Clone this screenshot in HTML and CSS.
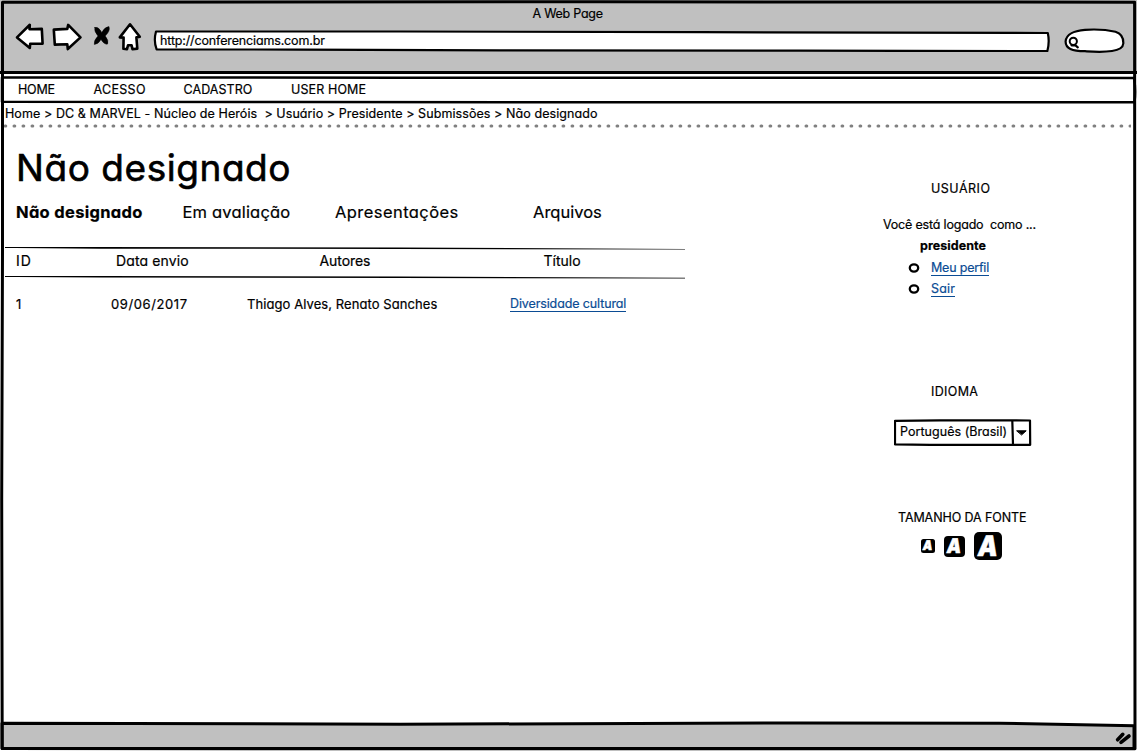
FILE: index.html
```html
<!DOCTYPE html>
<html lang="pt-BR">
<head>
<meta charset="utf-8">
<title>A Web Page</title>
<link rel="stylesheet" href="styles.css">
</head>
<body>
<div class="window">
  <header class="chrome">
    <div class="chrome-title">A Web Page</div>
    <div class="toolbar">
      <svg class="tools" width="130" height="30" viewBox="14 22 130 30">
        <path d="M17 37.4 29.8 24.8 29.5 29.2 41.8 28.9 42.6 43.6 30.2 43.8 29.8 47.9Z"/>
        <path d="M53.8 29.6 67.3 28.9 68.2 24.9 80.5 37.4 67.8 49 67.3 44.3 54.8 44.6Z"/>
        <path class="cross" d="M94.800 27.500Q98.500 26.500 101.800 32.500 104.500 27 109 26.600 110.500 31 105.200 36 109 40.500 107.600 44 104.500 45 101 39.500 98 44.500 94.300 44.400 93.500 40.500 98 36 94 31.500 94.800 27.500Z"/>
        <path d="M130 24.300 139.800 36.800 136.400 37.400 137.300 48.600 132.500 49.200 131.600 45.200 128 45.200 127 49.300 123.400 48.800 123.600 37.600 119.800 37.400Z"/>
      </svg>
      <div class="url">
        <svg class="sketch" width="897" height="22" viewBox="153 30 897 22"><path d="M156 31.500 400 31.500 700 32.200 1047.800 33Q1049.800 42 1047.300 51.200L800 50.700 500 50.300 300 49.600 156.600 49.300Q153.400 41 156 31.500Z"/></svg>
        <span>http://conferenciams.com.br</span>
      </div>
      <svg class="search" width="62" height="26" viewBox="1063 28 62 26">
        <path d="M1065.600 41.500C1066 34 1075 30.500 1085 29.800 1097 29 1108 30 1115.500 31.800 1121 33.500 1123.500 38 1123.300 43.500 1123 48 1119 50 1112 51 1102 52.500 1094 51.800 1085 51.200 1072 51 1065.600 48.500 1065.600 41.500Z"/>
        <circle cx="1073.300" cy="41.300" r="3.600"/><path d="M1071.500 45.300H1075.500L1077.800 47.300"/>
      </svg>
    </div>
  </header>
  <nav class="menu">
    <svg class="sketch" width="1137" height="31" viewBox="0 75 1137 31"><path d="M2 77.400 400 77.700 800 77.700 1134 77.900Q1136 90 1134.500 102.200L700 102.300 300 102 2 101.800Z"/></svg>
    <a class="m1">HOME</a><a class="m2">ACESSO</a><a class="m3">CADASTRO</a><a class="m4">USER HOME</a>
  </nav>
  <div class="crumbs">Home &gt; DC &amp; MARVEL - Núcleo de Heróis&nbsp; &gt; Usuário &gt; Presidente &gt; Submissões &gt; Não designado</div>
  <svg class="dots" width="1131" height="4"><line x1="5" y1="2" x2="1130" y2="2"/></svg>
  <div class="body">
    <main>
      <h1>Não designado</h1>
      <div class="tabs"><b class="t1">Não designado</b><span class="t2">Em avaliação</span><span class="t3">Apresentações</span><span class="t4">Arquivos</span></div>
      <div class="row head">
        <svg class="sketch" width="682" height="34" viewBox="4 246 682 34">
          <path d="M5 247.100H15L100 247.100 400 247.500 685 248.900V249.600L400 249 100 248.700 15 247.900H5Z"/>
          <path d="M5 276.100H15L100 276.100 400 276.400 685 277.800V278.500L400 277.900 100 277.600 15 276.900H5Z"/>
        </svg>
        <span class="c1">ID</span><span class="c2">Data envio</span><span class="c3">Autores</span><span class="c4">Título</span>
      </div>
      <div class="row item"><span class="c1">1</span><span class="c2">09/06/2017</span><span class="c3">Thiago Alves, Renato Sanches</span><span class="c4"><a class="link">Diversidade cultural</a></span></div>
    </main>
    <aside>
      <section class="user">
        <h2>USUÁRIO</h2>
        <p class="logged">Você está logado&nbsp; como ...</p>
        <p class="name">presidente</p>
        <ul>
          <li><svg width="12" height="10"><ellipse cx="6" cy="5" rx="4.200" ry="3.600"/></svg><a class="link l1">Meu perfil</a></li>
          <li><svg width="12" height="10"><ellipse cx="6" cy="5" rx="4.200" ry="3.600"/></svg><a class="link l2">Sair</a></li>
        </ul>
      </section>
      <section class="language">
        <h2>IDIOMA</h2>
        <div class="select">
          <svg class="sketch" width="138" height="28" viewBox="894 419 138 28"><path d="M895 420.800 940 420.300 1030 420.500 1030.200 444.800 930 444.900 895 444.300ZM1012.300 420.500 1013 444.500"/><path class="arrow" d="M1017 430.800H1026.200L1021.800 434.700Z"/></svg>
          <span>Português (Brasil)</span>
        </div>
      </section>
      <section class="fontsize">
        <h2>TAMANHO DA FONTE</h2>
        <div class="sizes"><span class="a s"><i>A</i></span><span class="a m"><i>A</i></span><span class="a l"><i>A</i></span></div>
      </section>
    </aside>
  </div>
  <footer>
    <svg class="sketch" width="1137" height="31" viewBox="0 720 1137 31">
      <path d="M2 723.300 400 724.200 800 723 1000 723.200 1134 725.700V748.600H2Z"/>
      <path class="grip" d="M1117.600 739.800 1122.800 734.300M1121 742.300 1129 736"/>
    </svg>
  </footer>
  <svg class="frame" width="1137" height="751" viewBox="0 0 1137 751"><path d="M2.500 2.200 600 1.800 1134.600 2.200 1134.800 380 1135 748.800 600 748.800 2.200 748.500 1.700 500 2.500 250Z"/></svg>
</div>
</body>
</html>
```
FILE: styles.css
```css
* { box-sizing: border-box; }
body { margin: 0; background: #fff; }
.window {
  position: relative;
  display: flex;
  flex-direction: column;
  width: 1137px;
  height: 751px;
  overflow: hidden;
  font: 12.5px/20px Inter, "Liberation Sans", sans-serif;
  font-feature-settings: "cv11";
  -webkit-text-stroke: .2px;
  color: #000;
}
h1, h2, p, ul { margin: 0; padding: 0; font-weight: 400; }
h2 { font-size: inherit; }
span, b, a, p, h1, h2, .crumbs { white-space: pre; }
svg { fill: #fff; stroke: #000; stroke-width: 2.2; stroke-linejoin: round; stroke-linecap: round; flex: none; display: block; }
.sketch, .frame { position: absolute; left: 0; top: 0; }
.frame { fill: none; stroke-width: 3; pointer-events: none; }

.chrome { height: 75px; background: #c0c0c0; border-bottom: 1px solid #fff; box-shadow: inset 0 -3px #000; padding: 4px 0 0 14px; }
.chrome-title { margin-left: 518.500px; letter-spacing: -.25px; }
.toolbar { display: flex; align-items: flex-start; margin-top: -2px; }
.tools { stroke-width: 2.6; }
.tools .cross { fill: #000; stroke-width: .5; }
.url { position: relative; width: 897px; height: 22px; margin: 8px 0 0 9px; padding: 1px 0 0 7px; letter-spacing: -.15px; }
.url span { position: relative; }
.search { margin: 6px 0 0 13px; }
.search circle { stroke-width: 2; }

.menu { position: relative; display: flex; height: 28px; padding: 5px 0 0 18px; }
.menu .sketch { stroke-width: 2.5; }
.menu a { position: relative; }
.m1 { width: 75.500px; letter-spacing: -.2px; }
.m2 { width: 90px; letter-spacing: .3px; }
.m3 { width: 107.500px; letter-spacing: .07px; }
.m4 { letter-spacing: .12px; }

.crumbs { padding: 1px 0 0 5px; letter-spacing: .08px; height: 21px; }
.dots { stroke: #808080; stroke-width: 3; stroke-dasharray: .8 8.2; }

.body { display: flex; height: 595px; }
main { width: 883px; }
h1 { font-size: 37px; line-height: 44px; margin: 18px 0 0 16px; letter-spacing: .55px; -webkit-text-stroke: .6px; }
.tabs { display: flex; padding: 10px 0 0 16px; font-size: 16.5px; line-height: 24px; }
.t1 { width: 166.500px; letter-spacing: .32px; }
.t2 { width: 152.500px; letter-spacing: .18px; }
.t3 { width: 198px; letter-spacing: .43px; }
.row { position: relative; display: flex; }
.row span { position: relative; }
.head { margin: 22px 0 0 4px; height: 34px; padding: 5px 0 0 12px; font-size: 14px; }
.head .sketch { fill: #000; stroke: none; }
.head .c1 { width: 100px; letter-spacing: 1px; }
.head .c2 { width: 203.500px; letter-spacing: .12px; }
.head .c3 { width: 224px; letter-spacing: -.06px; }
.item { margin-top: 14px; padding-left: 16px; font-size: 13px; }
.item .c1 { width: 95px; }
.item .c2 { width: 136px; letter-spacing: .6px; }
.item .c3 { width: 263px; letter-spacing: .08px; }
.item .c4 { font-size: 12.5px; letter-spacing: -.12px; }
.link { color: #0b4c94; border-bottom: 1px solid #0b4c94; line-height: 15px; display: inline-block; }

aside { padding-top: 51px; }
.user h2 { margin-left: 48px; letter-spacing: .5px; }
.logged { margin-top: 16px; letter-spacing: -.19px; }
.name { margin: 1px 0 0 37px; font-weight: 700; letter-spacing: .05px; }
li { display: flex; align-items: center; height: 21px; margin-left: 25px; }
ul { padding-top: 1px; }
li svg { stroke-width: 2.3; margin-right: 11px; }
.l1 { letter-spacing: -.2px; }
.l2 { letter-spacing: .2px; }
.language { margin-top: 83px; }
.language h2 { margin-left: 48px; letter-spacing: .35px; }
.select { position: relative; width: 138px; height: 28px; margin: 17px 0 0 11px; padding: 3px 0 0 6px; letter-spacing: .04px; }
.select span { position: relative; }
.arrow { fill: #000; stroke-width: 1; }
.fontsize { margin-top: 61px; }
.fontsize h2 { margin-left: 15px; letter-spacing: -.1px; }
.sizes { display: flex; align-items: center; margin: 4px 0 0 38px; }
.a { display: flex; align-items: center; justify-content: center; background: #000; color: #fff; font-weight: 900; line-height: 1; }
.a i { font-style: normal; transform: skewX(-8deg) scaleY(1.12); -webkit-text-stroke: .5px; }
.s { width: 14px; height: 14px; font-size: 12px; border-radius: 2.5px; margin-right: 9px; }
.m { width: 21px; height: 21px; font-size: 18px; border-radius: 4px; margin-right: 9px; }
.l { width: 28px; height: 28px; font-size: 25px; border-radius: 5px; }

footer { position: relative; height: 28px; margin-top: auto; }
footer .sketch { top: -3px; fill: #c0c0c0; stroke-width: 3; }
footer .grip { stroke-width: 3.6; fill: none; }
```
